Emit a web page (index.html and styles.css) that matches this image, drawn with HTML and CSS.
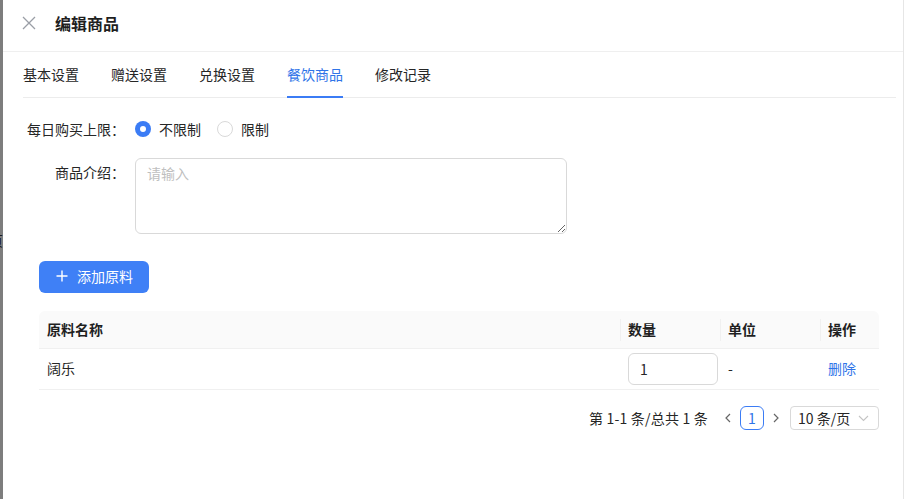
FILE: index.html
```html
<!DOCTYPE html>
<html lang="zh-CN">
<head>
<meta charset="utf-8">
<title>编辑商品</title>
<link rel="stylesheet" href="styles.css">
</head>
<body>
<div class="screen">
  <div class="mask"><span class="mask-glyph">页</span></div>
  <div class="drawer">
    <div class="drawer-header">
      <svg class="close" width="14" height="14" viewBox="0 0 14 14"><path d="M1 1L13 13M13 1L1 13" stroke="#9a9ea6" stroke-width="1.3" fill="none"/></svg>
      <div class="title">编辑商品</div>
    </div>
    <div class="drawer-body">
      <div class="tabs">
        <div class="tab">基本设置</div>
        <div class="tab">赠送设置</div>
        <div class="tab">兑换设置</div>
        <div class="tab active">餐饮商品</div>
        <div class="tab">修改记录</div>
      </div>
      <div class="form-row radio-row">
        <div class="label">每日购买上限：</div>
        <div class="control radios">
          <label class="radio"><span class="dot checked"></span>不限制</label>
          <label class="radio"><span class="dot"></span>限制</label>
        </div>
      </div>
      <div class="form-row area-row">
        <div class="label">商品介绍：</div>
        <div class="control">
          <textarea class="textarea" placeholder="请输入"></textarea>
        </div>
      </div>
      <div class="section">
        <button class="btn-primary"><svg width="12" height="12" viewBox="0 0 12 12"><path d="M6 0.5V11.5M0.5 6H11.5" stroke="#fff" stroke-width="1.4"/></svg>添加原料</button>
        <div class="table">
          <div class="tr thead">
            <div class="td c1">原料名称</div>
            <div class="td c2 sep">数量</div>
            <div class="td c3 sep">单位</div>
            <div class="td c4 sep">操作</div>
          </div>
          <div class="tr tbody">
            <div class="td c1">阔乐</div>
            <div class="td c2"><input class="num" value="1"></div>
            <div class="td c3">-</div>
            <div class="td c4"><a class="link">删除</a></div>
          </div>
        </div>
        <div class="pager">
          <span class="total">第 1-1 条/总共 1 条</span>
          <span class="arrow"><svg width="8" height="10" viewBox="0 0 8 10"><path d="M6 1L2 5L6 9" stroke="#666" stroke-width="1.2" fill="none"/></svg></span>
          <span class="page">1</span>
          <span class="arrow"><svg width="8" height="10" viewBox="0 0 8 10"><path d="M2 1L6 5L2 9" stroke="#666" stroke-width="1.2" fill="none"/></svg></span>
          <span class="size">10 条/页<svg width="11" height="7" viewBox="0 0 11 7"><path d="M1 1L5.5 5.5L10 1" stroke="#c4c4c4" stroke-width="1.1" fill="none"/></svg></span>
        </div>
      </div>
    </div>
  </div>
  <div class="edge"></div>
</div>
</body>
</html>
```

FILE: styles.css
```css
* { box-sizing: border-box; }
html, body { margin: 0; padding: 0; }
body {
  font-family: "Noto Sans CJK SC", "Noto Sans", sans-serif;
  font-size: 14px;
  color: #262626;
  background: #fff;
}
.screen {
  display: flex;
  width: 905px;
  height: 499px;
  overflow: hidden;
}
.mask {
  width: 3px;
  flex: none;
  background: #7d7d7d;
  overflow: hidden;
  padding-top: 231px;
}
.mask-glyph {
  display: block;
  margin-left: -11px;
  font-size: 14px;
  line-height: 18px;
  color: #1a1a1a;
}
.drawer {
  flex: 1;
  display: flex;
  flex-direction: column;
  background: #fff;
}
.edge {
  width: 2px;
  flex: none;
  border-left: 1px solid #e6e6e6;
  background: #fff;
}
.drawer-header {
  height: 52px;
  border-bottom: 1px solid #efefef;
  display: flex;
  align-items: center;
  padding: 0 0 6px 19px;
}
.close { margin-right: 19px; }
.title {
  font-size: 16px;
  font-weight: 700;
  color: #1f1f1f;
}
.drawer-body {
  padding: 0 7px 0 20px;
}
.tabs {
  display: flex;
  gap: 32px;
  height: 46px;
  border-bottom: 1px solid #ececec;
}
.tab {
  display: flex;
  align-items: center;
  height: 46px;
  padding-bottom: 2px;
  color: #262626;
  line-height: 1;
}
.tab.active {
  color: #2f74e8;
  box-shadow: inset 0 -2px 0 #3b7cf5;
}
.form-row { display: flex; }
.label {
  width: 112px;
  flex: none;
  text-align: right;
  padding-right: 10px;
  color: #262626;
}
.radio-row {
  margin-top: 15px;
  height: 32px;
  align-items: center;
}
.radios { display: flex; gap: 16px; }
.radio {
  display: flex;
  align-items: center;
  gap: 8px;
}
.dot {
  width: 16px;
  height: 16px;
  border-radius: 50%;
  border: 1px solid #d9d9d9;
  background: #fff;
  position: relative;
}
.dot.checked {
  border: none;
  background: #3b7cf5;
}
.dot.checked::after {
  content: "";
  position: absolute;
  left: 5px;
  top: 5px;
  width: 6px;
  height: 6px;
  border-radius: 50%;
  background: #fff;
}
.area-row {
  margin-top: 13px;
}
.area-row .label { line-height: 29px; }
.textarea {
  display: block;
  width: 432px;
  height: 76px;
  border: 1px solid #d9d9d9;
  border-radius: 6px;
  padding: 4px 11px;
  font-family: inherit;
  font-size: 14px;
  color: #262626;
  resize: vertical;
  outline: none;
}
.textarea::placeholder { color: #bfbfbf; }
.section {
  padding-left: 16px;
  padding-right: 17px;
}
.btn-primary {
  margin-top: 27px;
  display: flex;
  align-items: center;
  gap: 9px;
  height: 32px;
  width: 110px;
  padding: 0 0 2px 17px;
  border: none;
  border-radius: 6px;
  background: #3f80f6;
  color: #fff;
  font-family: inherit;
  font-size: 14px;
}
.table {
  margin-top: 18px;
}
.tr {
  display: flex;
  border-bottom: 1px solid #f0f0f0;
}
.thead {
  height: 38px;
  background: #fafafa;
  font-weight: 700;
  color: #1f1f1f;
  border-radius: 6px 6px 0 0;
}
.thead .td { padding-bottom: 2px; }
.tbody { height: 41px; }
.tbody .c1, .tbody .c3, .tbody .c4 { padding-bottom: 2px; }
.td {
  display: flex;
  align-items: center;
  padding-left: 8px;
  position: relative;
}
.c1 { flex: 1; }
.c2, .c3, .c4 { width: 100px; flex: none; }
.c4 { width: 59px; }
.sep::before {
  content: "";
  position: absolute;
  left: 0;
  top: 50%;
  height: 22px;
  margin-top: -11px;
  width: 1px;
  background: #f0f0f0;
}
.num {
  width: 90px;
  height: 32px;
  border: 1px solid #d9d9d9;
  border-radius: 6px;
  padding: 0 11px;
  font-family: inherit;
  font-size: 14px;
  color: #262626;
  outline: none;
}
.link { color: #2f74e8; }
.pager {
  margin-top: 16px;
  display: flex;
  justify-content: flex-end;
  align-items: center;
  height: 24px;
}
.total { margin-right: 10px; color: #262626; letter-spacing: 0.2px; }
.arrow {
  width: 20px;
  height: 24px;
  display: flex;
  align-items: center;
  justify-content: center;
}
.page {
  width: 24px;
  height: 24px;
  margin: 0 2px;
  border: 1px solid #3b7cf5;
  border-radius: 6px;
  color: #2f74e8;
  display: flex;
  align-items: center;
  justify-content: center;
  font-size: 14px;
}
.size {
  margin-left: 4px;
  width: 89px;
  height: 24px;
  border: 1px solid #d9d9d9;
  border-radius: 4px;
  display: flex;
  align-items: center;
  justify-content: space-between;
  padding: 0 9px 0 7px;
  color: #262626;
}
```
